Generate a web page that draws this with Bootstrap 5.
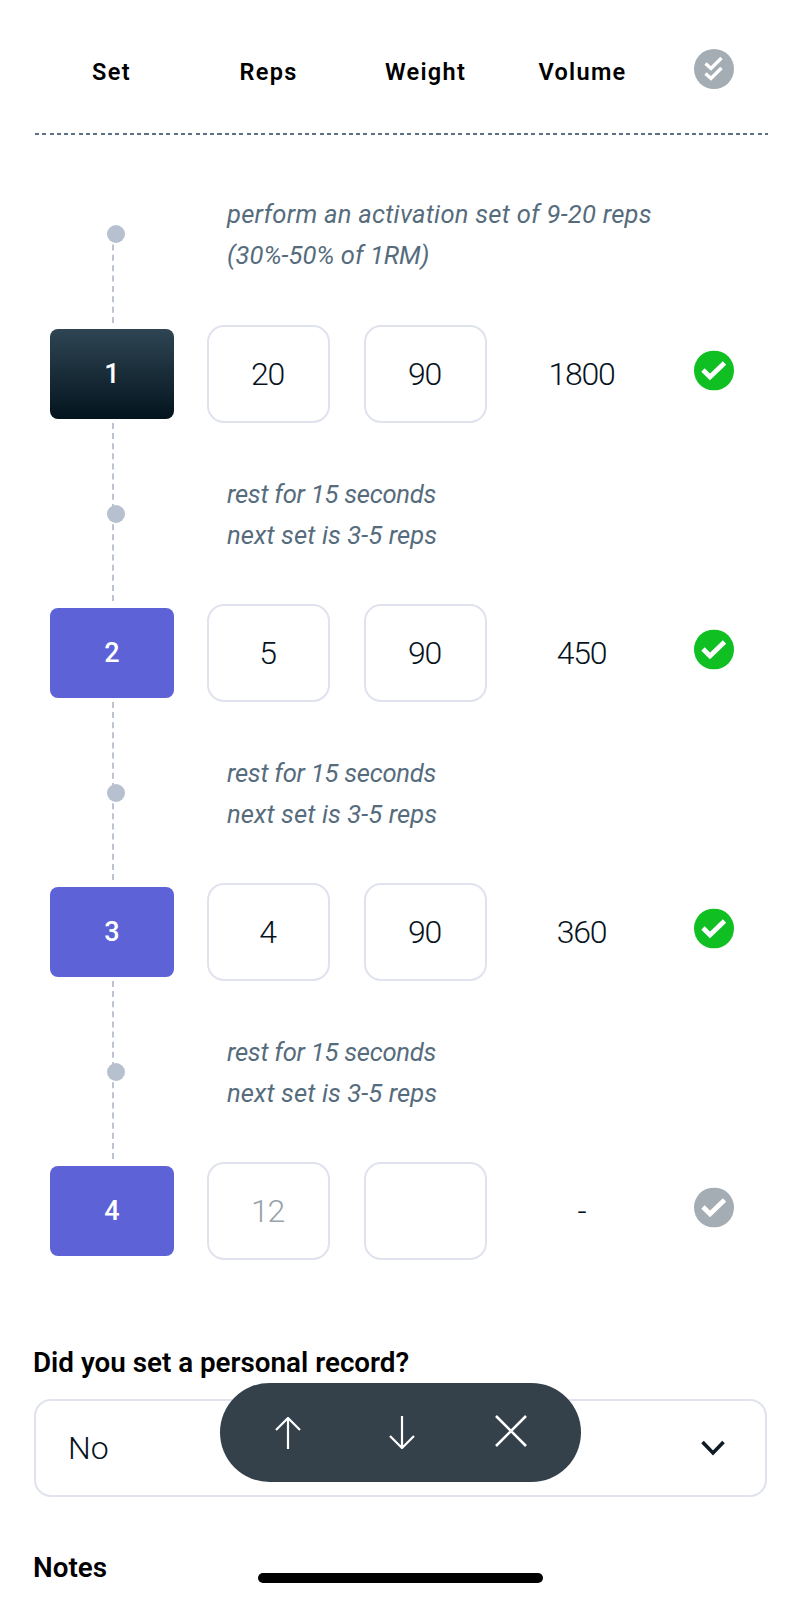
<!DOCTYPE html>
<html lang="en">
<head>
<meta charset="utf-8">
<title>Sets</title>
<link rel="stylesheet" href="https://cdn.jsdelivr.net/npm/bootstrap@5.3.0/dist/css/bootstrap.min.css">
<style>
html,body{height:1600px;overflow:hidden;background:#fff}
body{font-family:Roboto,"Liberation Sans",sans-serif;color:#0d1a24}
.sheet{width:734px;margin-left:33px}
.cols{display:grid;grid-template-columns:157px 157px 157px 157px 106px;align-items:center;justify-items:center}
.head-row{padding-top:53px;height:133px;align-items:start}
.head-row>*{height:40px;display:flex;align-items:center;justify-content:center}
.head-cell{font-size:23.5px;font-weight:600;letter-spacing:1.3px;color:#000}
.ico{width:40px;height:40px;display:block}
.ico-up{transform:translateY(-3.5px)}
.ico-top{transform:translateY(-4px)}
.dash-line{height:2px;margin-left:2px;margin-right:-1px;background:repeating-linear-gradient(90deg,#5c7284 0 4px,transparent 4px 7.3px)}
.note-row{align-items:stretch;height:181px}
.note-first{height:190px}
.rail-wrap{justify-self:stretch;position:relative}
.rail{position:absolute;left:79.3px;top:0;bottom:3px;border-left:2px dashed #bcc4d2}
.note-first .rail{top:99px;bottom:2px}
.pin{position:absolute;width:18px;height:18px;border-radius:50%;background:#b7c0cf;left:-7px;top:82px}
.note-first .pin{top:-9px}
.note-text{grid-column:2 / 6;justify-self:start;padding:51px 0 0 37px;font-style:italic;font-weight:400;font-size:25.6px;line-height:41px;color:#566c7c;white-space:nowrap}
.note-first .note-text{padding-top:59px}
.line-wide{letter-spacing:.25px}
.line-next{letter-spacing:.1px}
.line-tight{letter-spacing:-.25px}
.tag{width:124px;height:90px;border-radius:8px;background:#5d63d6;color:#fff;font-size:27px;font-weight:500;display:flex;align-items:center;justify-content:center;margin-left:1px}
.tag-dark{background:linear-gradient(180deg,#2f4553,#03141e)}
.cell-box.form-control{width:123px;height:98px;border:2px solid #e0e3ee;border-radius:17px;font-size:32px;font-weight:350;line-height:1;display:flex;align-items:center;justify-content:center;color:#07131c;padding:0 2px 0 0;letter-spacing:-1.2px}
.cell-box.muted-val{color:#98a2a9}
.vol{font-size:32px;font-weight:350;letter-spacing:-1.2px;padding-right:2px;color:#07131c}
.field-label{font-size:27.8px;font-weight:600;color:#000;line-height:38px}
.label-gap{margin-bottom:17px}
.pick.form-control{height:98px;width:733px;margin-left:1px;border:2px solid #e0e3ee;border-radius:17px;font-size:32px;font-weight:350;padding:0 40px 0 32px;color:#07131c}
.pick svg{width:24px;height:16px}
.pr-block{margin-top:84px}
.notes-block{margin-top:52px}
.float-pill{position:absolute;left:220px;top:1383px;width:361px;height:99px;border-radius:50px;background:rgba(50,62,72,.99)}
.float-pill svg{position:absolute;stroke:#fff;fill:none}
.home-bar{position:absolute;left:258px;top:1573px;width:285px;height:10px;border-radius:5px;background:#000}
</style>
</head>
<body>
<div class="sheet">
  <div class="cols head-row">
    <div class="head-cell">Set</div><div class="head-cell">Reps</div><div class="head-cell">Weight</div><div class="head-cell">Volume</div>
    <div><svg class="ico ico-top" viewBox="0 0 40 40"><circle cx="20" cy="20" r="20" fill="#a3adb3"/><path d="M11.500 14.500l5.500 5 10.500-10.500M11.500 24.500l5.500 5 10.500-10.500" fill="none" stroke="#fff" stroke-width="3.400"/></svg></div>
  </div>
  <div class="dash-line"></div>

  <div class="cols note-row note-first">
    <div class="rail-wrap"><div class="rail"><span class="pin"></span></div></div>
    <div class="note-text"><span class="line-wide">perform an activation set of 9-20 reps</span><br>(30%-50% of 1RM)</div>
  </div>
  <div class="cols">
    <div class="tag tag-dark">1</div>
    <div class="cell-box form-control">20</div>
    <div class="cell-box form-control">90</div>
    <div class="vol">1800</div>
    <svg class="ico ico-up" viewBox="0 0 40 40"><circle cx="20" cy="20" r="20" fill="#10c022"/><path d="M9 19.500l7 7 14.500-14" fill="none" stroke="#fff" stroke-width="4.800"/></svg>
  </div>

  <div class="cols note-row">
    <div class="rail-wrap"><div class="rail"><span class="pin"></span></div></div>
    <div class="note-text"><span class="line-tight">rest for 15 seconds</span><br><span class="line-next">next set is 3-5 reps</span></div>
  </div>
  <div class="cols">
    <div class="tag">2</div>
    <div class="cell-box form-control">5</div>
    <div class="cell-box form-control">90</div>
    <div class="vol">450</div>
    <svg class="ico ico-up" viewBox="0 0 40 40"><circle cx="20" cy="20" r="20" fill="#10c022"/><path d="M9 19.500l7 7 14.500-14" fill="none" stroke="#fff" stroke-width="4.800"/></svg>
  </div>

  <div class="cols note-row">
    <div class="rail-wrap"><div class="rail"><span class="pin"></span></div></div>
    <div class="note-text"><span class="line-tight">rest for 15 seconds</span><br><span class="line-next">next set is 3-5 reps</span></div>
  </div>
  <div class="cols">
    <div class="tag">3</div>
    <div class="cell-box form-control">4</div>
    <div class="cell-box form-control">90</div>
    <div class="vol">360</div>
    <svg class="ico ico-up" viewBox="0 0 40 40"><circle cx="20" cy="20" r="20" fill="#10c022"/><path d="M9 19.500l7 7 14.500-14" fill="none" stroke="#fff" stroke-width="4.800"/></svg>
  </div>

  <div class="cols note-row">
    <div class="rail-wrap"><div class="rail"><span class="pin"></span></div></div>
    <div class="note-text"><span class="line-tight">rest for 15 seconds</span><br><span class="line-next">next set is 3-5 reps</span></div>
  </div>
  <div class="cols">
    <div class="tag">4</div>
    <div class="cell-box form-control muted-val">12</div>
    <div class="cell-box form-control"></div>
    <div class="vol">-</div>
    <svg class="ico ico-up" viewBox="0 0 40 40"><circle cx="20" cy="20" r="20" fill="#a3adb3"/><path d="M9 19.500l7 7 14.500-14" fill="none" stroke="#fff" stroke-width="4.800"/></svg>
  </div>

  <div class="pr-block">
    <div class="field-label label-gap">Did you set a personal record?</div>
    <div class="pick form-control d-flex align-items-center justify-content-between">
      <span>No</span>
      <svg viewBox="0 0 24 16"><path d="M1.500 2l10.500 11 10.500-11" fill="none" stroke="#0f1c26" stroke-width="3.600"/></svg>
    </div>
  </div>
  <div class="notes-block">
    <div class="field-label">Notes</div>
  </div>
</div>

<div class="float-pill">
  <svg style="left:55px;top:34px" width="26" height="32" viewBox="0 0 26 32" stroke-width="2.200"><path d="M13 32V1M1 13L13 1l12 12"/></svg>
  <svg style="left:169px;top:33px" width="26" height="33" viewBox="0 0 26 33" stroke-width="2.200"><path d="M13 0v32M1 20l12 12 12-12"/></svg>
  <svg style="left:275px;top:32px" width="32" height="32" viewBox="0 0 32 32" stroke-width="2.600"><path d="M1 1l30 30M31 1L1 31"/></svg>
</div>
<div class="home-bar"></div>
<script src="https://cdn.jsdelivr.net/npm/bootstrap@5.3.0/dist/js/bootstrap.bundle.min.js"></script>
</body>
</html>
